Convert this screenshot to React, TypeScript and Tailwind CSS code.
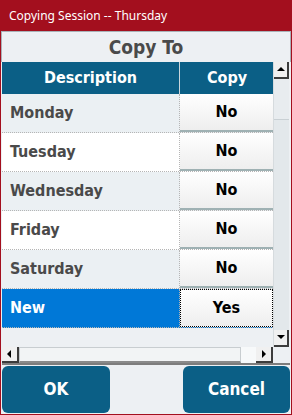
import React from "react";

type Row = { day: string; copy: string; selected?: boolean };

const rows: Row[] = [
  { day: "Monday", copy: "No" },
  { day: "Tuesday", copy: "No" },
  { day: "Wednesday", copy: "No" },
  { day: "Friday", copy: "No" },
  { day: "Saturday", copy: "No" },
  { day: "New", copy: "Yes", selected: true },
];

const tahoma = { fontFamily: '"DejaVu Sans Condensed", "DejaVu Sans", sans-serif' };

function Arrow({ dir }: { dir: "up" | "down" | "left" | "right" }) {
  const pts = {
    up: "1,6 5,2 9,6",
    down: "1,2 5,6 9,2",
    left: "6,1 2,5 6,9",
    right: "3,1 7,5 3,9",
  }[dir];
  return (
    <svg width="10" height="10" viewBox="0 0 10 10">
      <polygon points={pts} fill="#000" />
    </svg>
  );
}

export default function App() {
  return (
    <div className="w-[292px] h-[415px] flex flex-col bg-[#a30f1e]" style={tahoma}>
      {/* Title bar */}
      <div
        className="h-[31px] shrink-0 flex items-center pl-[9px] text-white text-[12px]"
        style={{ fontFamily: '"Noto Sans", "Open Sans", sans-serif' }}
      >
        Copying Session -- Thursday
      </div>

      <div className="flex-1 mx-px mb-px bg-[#edf0f3] flex flex-col">
        {/* Heading */}
        <div className="h-[31px] shrink-0 border border-[#a9b2b8] border-b-0 flex items-center justify-center text-[19px] font-bold text-[#4a4a4a]">
          Copy To
        </div>

        {/* Grid */}
        <div className="h-[303px] shrink-0 mx-px flex flex-col border-b-2 border-[#7d7d7d]">
          <div className="flex-1 flex">
            <div className="w-[271px] flex flex-col">
              <div className="h-[32px] flex bg-[#0b5f86] text-white text-[16px] font-bold">
                <div className="w-[178px] flex items-center justify-center border-r border-[#c9d6dc]">Description</div>
                <div className="flex-1 flex items-center justify-center ml-px">Copy</div>
              </div>
              {rows.map((r, i) => (
                <div
                  key={r.day}
                  className={
                    "h-[39px] flex border-b border-dotted border-[#b5b5b5] " +
                    (r.selected ? "bg-[#0078d7]" : i % 2 === 0 ? "bg-[#ebf0f3]" : "bg-white")
                  }
                >
                  <div
                    className={
                      "w-[178px] flex items-center pl-[8px] text-[16px] font-bold border-r border-dotted border-[#b5b5b5] " +
                      (r.selected ? "text-white" : "text-[#4a4a4a]")
                    }
                  >
                    {r.day}
                  </div>
                  <div
                    className={
                      "flex-1 flex items-center justify-center text-[16px] font-bold text-black bg-gradient-to-b from-white to-[#eeeeee] " +
                      (r.selected ? "border border-dotted border-black" : "border-b-2 border-[#9fb1b3]")
                    }
                  >
                    {r.copy}
                  </div>
                </div>
              ))}
              <div className="flex-1" />
            </div>
            {/* Vertical scrollbar */}
            <div className="w-[16px] flex flex-col bg-[#e8ecef] border-l border-[#d6dbde]">
              <div className="h-[17px] flex items-center justify-center bg-[#f0f0f0] border-r-2 border-b-2 border-[#3c3c3c]">
                <Arrow dir="up" />
              </div>
              <div className="h-[40px]" />
              <div className="flex-1 bg-[#e3e8eb] border-t border-[#c9d0d4]" />
              <div className="h-[17px] flex items-center justify-center bg-[#f0f0f0] border-r-2 border-b-2 border-[#3c3c3c]">
                <Arrow dir="down" />
              </div>
            </div>
          </div>
          {/* Horizontal scrollbar */}
          <div className="h-[16px] shrink-0 flex">
            <div className="w-[17px] flex items-center justify-center bg-[#f0f0f0] border-r-2 border-b-2 border-[#3c3c3c]">
              <Arrow dir="left" />
            </div>
            <div className="w-[222px] bg-[#f2f4f5] border border-[#c8cdd0] border-b-2 border-b-[#8a8a8a]" />
            <div className="w-[15px] bg-[#f7f9fa]" />
            <div className="w-[17px] flex items-center justify-center bg-[#f0f0f0] border-r-2 border-b-2 border-[#3c3c3c]">
              <Arrow dir="right" />
            </div>
            <div className="flex-1 bg-[#edf0f3]" />
          </div>
        </div>

        {/* Buttons */}
        <div className="flex-1 flex justify-between px-px pt-px pb-px">
          <button className="w-[108px] rounded-[6px] bg-[#0b5f86] text-white text-[17px] font-bold" style={tahoma}>
            OK
          </button>
          <button className="w-[107px] rounded-[6px] bg-[#0b5f86] text-white text-[17px] font-bold" style={tahoma}>
            Cancel
          </button>
        </div>
      </div>
    </div>
  );
}
